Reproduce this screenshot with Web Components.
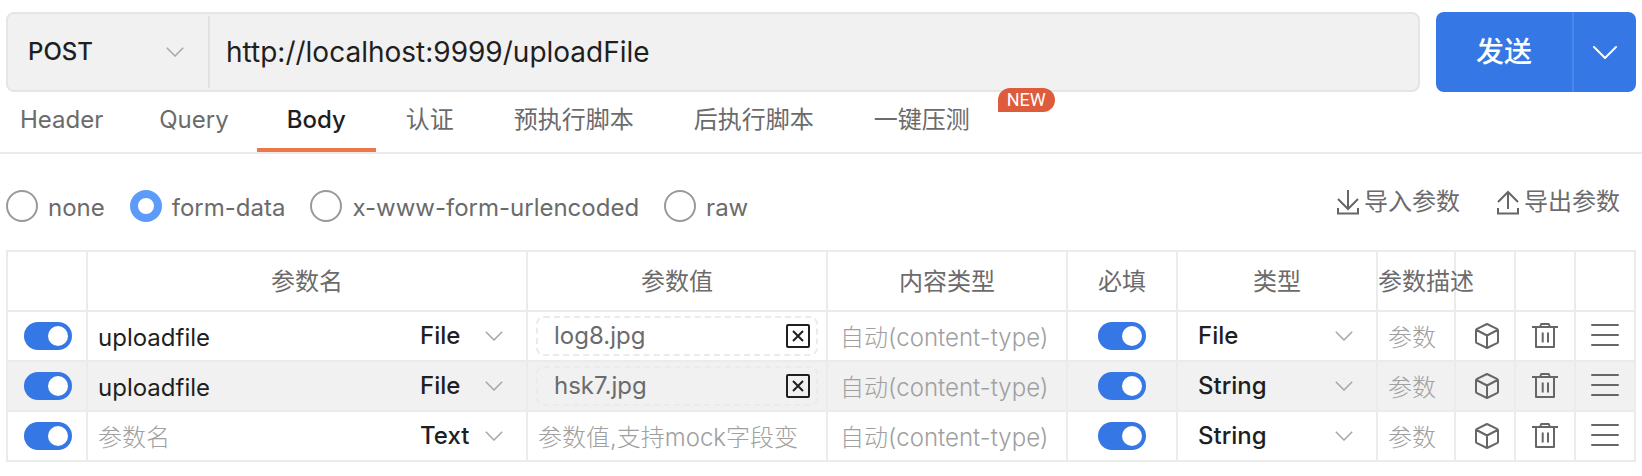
<!DOCTYPE html>
<html lang="zh-CN">
<head>
<meta charset="utf-8">
<meta name="viewport" content="width=device-width, initial-scale=1">
<title>API request</title>
<style>
  :root {
    --ink: #1f1f1f;
    --muted: #6b6b6b;
    --faint: #a0a0a0;
    --line: #ebebeb;
    --fill: #f1f1f1;
    --blue: #3577e5;
  }
  body {
    margin: 0;
    background: #fff;
    color: var(--muted);
    font: 24px/32px Inter, "Noto Sans CJK SC", sans-serif;
  }
</style>
</head>
<body>
<api-request></api-request>
<script>
const base = `<style>
  *, ::before, ::after { box-sizing: border-box; }
  :host { display: block; }
  input, select, button { font: inherit; color: inherit; margin: 0; padding: 0; border: 0; background: none; outline: 0; }
  button, select { cursor: pointer; }
  svg { display: block; }
</style>`;

class Base extends HTMLElement {
  connectedCallback() {
    if (this.shadowRoot) return;
    this.attachShadow({ mode: 'open' }).innerHTML = base + this.view();
  }
  attr(name) { return this.getAttribute(name) || ''; }
}

const ICONS = {
  chevron: [18, 10, '<path d="M.8.8 9 9l8.2-8.2" stroke="#a6a6a6" stroke-width="1.5"/>'],
  chevronWide: [24, 13, '<path d="M1 1l11 11L23 1" stroke="#fff" stroke-width="2" stroke-linecap="round" stroke-linejoin="round"/>'],
  import: [22, 26, '<path d="M11 1v19M1 10l10 10 10-10M1 19v5.5h20V19"/>'],
  export: [22, 26, '<path d="M11 20V3M1 13L11 3l10 10M1 19v5.5h20V19"/>'],
  close: [24, 24, '<g stroke="#1f1f1f"><rect x="1" y="1" width="22" height="22" rx="1"/><path d="M7 7l10 10M17 7L7 17"/></g>'],
  cube: [24, 26, '<path stroke-linejoin="round" d="M12 1l10 4.800q1 .5 1 1.500v11.400q0 1-1 1.500L12 25 2 20.200q-1-.5-1-1.500V7.300q0-1 1-1.500zM1.500 7L12 12.500 22.500 7M12 12.500v12"/>'],
  trash: [26, 26, '<path stroke-linejoin="round" d="M0 4h26M4 4v20h18V4M8 4l1.200-3h7.600L18 4M10.700 9.500v10M16 9.500v10"/>'],
  menu: [28, 24, '<path d="M1 1h26M1 11h26M1 21h26" stroke-linecap="round"/>']
};

customElements.define('ui-icon', class extends Base {
  view() {
    const [w, h, art] = ICONS[this.attr('name')];
    return `<style>:host { display: block; flex: none; }</style>
      <svg width="${w}" height="${h}" viewBox="0 0 ${w} ${h}" fill="none" stroke="#666" stroke-width="2" aria-hidden="true">${art}</svg>`;
  }
});

customElements.define('ui-switch', class extends Base {
  view() {
    return `<style>
      :host { width: 48px; height: 28px; }
      input { appearance: none; display: flex; align-items: center; width: 48px; height: 28px; padding: 0 4px; border-radius: 14px; background: #c4c4c4; }
      input::before { content: ""; width: 20px; height: 20px; border-radius: 50%; background: #fff; }
      input:checked { background: var(--blue); justify-content: flex-end; }
    </style><input type="checkbox" role="switch" checked aria-label="${this.attr('label')}">`;
  }
});

customElements.define('ui-select', class extends Base {
  view() {
    const value = this.attr('value');
    const rest = this.attr('options').split(',').filter(o => o && o !== value);
    return `<style>
      :host { display: grid; grid-template-columns: 1fr auto; align-items: center; color: var(--ink); font-weight: 500; }
      select { appearance: none; grid-area: 1 / 1 / 2 / 3; width: 100%; height: 32px; line-height: 32px; }
      ui-icon { grid-area: 1 / 2; pointer-events: none; }
    </style><select aria-label="${this.attr('label')}">
      <option selected>${value}</option>${rest.map(o => `<option>${o}</option>`).join('')}
    </select><ui-icon name="chevron"></ui-icon>`;
  }
});

customElements.define('ui-field', class extends Base {
  view() {
    return `<style>
      :host { color: var(--ink); min-width: 0; padding-top: 4px; }
      input { display: block; width: 100%; height: 32px; line-height: 32px; }
      input::placeholder { color: var(--faint); opacity: 1; font-weight: 300; }
    </style><input type="text" aria-label="${this.attr('label')}" value="${this.attr('value')}" placeholder="${this.attr('placeholder')}">`;
  }
});

customElements.define('ui-file', class extends Base {
  view() {
    return `<style>
      :host { display: flex; align-items: center; justify-content: space-between; height: 40px; padding: 0 6px 0 16px; border: 2px dashed var(--line); border-radius: 8px; }
    </style><slot></slot><button type="button" aria-label="移除文件"><ui-icon name="close"></ui-icon></button>`;
  }
});

customElements.define('request-bar', class extends Base {
  view() {
    return `<style>
      :host { display: flex; gap: 16px; padding: 12px 6px 0; }
      .address { flex: 1; display: flex; align-items: center; height: 80px; border: 2px solid #e5e5e5; border-radius: 8px; background: var(--fill); }
      ui-select { width: 202px; height: 72px; padding: 0 24px 0 20px; border-right: 2px solid #e2e2e2; }
      .url { flex: 1; min-width: 0; padding: 0 16px; height: 72px; font-size: 28px; color: var(--ink); }
      .send { display: flex; width: 200px; height: 80px; border-radius: 8px; background: var(--blue); color: #fff; overflow: hidden; }
      .go { flex: 1; font-size: 28px; font-weight: 500; }
      .more { display: grid; place-items: center; width: 64px; border-left: 2px solid #4a87ec; }
    </style>
    <div class="address">
      <ui-select label="请求方法" value="POST" options="GET,POST,PUT,DELETE"></ui-select>
      <input class="url" type="text" aria-label="请求地址" value="http://localhost:9999/uploadFile">
    </div>
    <div class="send">
      <button class="go" type="button">发送</button>
      <button class="more" type="button" aria-label="更多发送选项"><ui-icon name="chevronWide"></ui-icon></button>
    </div>`;
  }
});

customElements.define('request-tabs', class extends Base {
  view() {
    const tabs = ['Header', 'Query', 'Body', '认证', '预执行脚本', '后执行脚本', '一键压测'];
    return `<style>
      nav { display: flex; border-bottom: 2px solid var(--line); }
      button { position: relative; height: 60px; padding: 0 30px; border-bottom: 4px solid transparent; white-space: nowrap; }
      button:nth-child(-n+2) { padding: 0 28px; }
      button:first-child { padding-left: 20px; }
      button[aria-selected=true] { color: var(--ink); font-weight: 500; border-color: #ec7748; }
      .badge { position: absolute; left: calc(100% - 2px); top: -4px; padding: 0 9px; border-radius: 12px 12px 12px 0; background: #de5b3c; color: #fff; font: 18px/24px Roboto, sans-serif; }
    </style>
    <nav role="tablist">${tabs.map(t => `<button type="button" role="tab" aria-selected="${t === 'Body'}">${t}${t === '一键压测' ? '<span class="badge">NEW</span>' : ''}</button>`).join('')}</nav>`;
  }
});

customElements.define('body-options', class extends Base {
  view() {
    const kinds = ['none', 'form-data', 'x-www-form-urlencoded', 'raw'];
    return `<style>
      :host { display: flex; justify-content: space-between; align-items: flex-start; padding: 28px 22px 28px 6px; }
      .kinds { display: flex; gap: 25px; padding-top: 8px; }
      label { display: flex; gap: 10px; align-items: center; height: 32px; }
      label span { padding-top: 4px; }
      input { appearance: none; width: 32px; height: 32px; border: 2px solid #999; border-radius: 50%; background: #fff; }
      input:checked { border: 8px solid #5c9cf8; }
      .actions { display: flex; gap: 37px; padding-top: 2px; }
      .actions button { display: flex; align-items: center; gap: 5px; height: 36px; }
    </style>
    <div class="kinds" role="radiogroup" aria-label="Body">${kinds.map(k => `<label><input type="radio" name="kind"${k === 'form-data' ? ' checked' : ''}><span>${k}</span></label>`).join('')}</div>
    <div class="actions">
      <button type="button"><ui-icon name="import"></ui-icon>导入参数</button>
      <button type="button"><ui-icon name="export"></ui-icon>导出参数</button>
    </div>`;
  }
});

customElements.define('param-table', class extends Base {
  view() {
    const rows = [
      { name: 'uploadfile', kind: 'File', file: 'log8.jpg', type: 'File' },
      { name: 'uploadfile', kind: 'File', file: 'hsk7.jpg', type: 'String' },
      { name: '', kind: 'Text', file: '', type: 'String' }
    ];
    const icon = (name, label) => `<td><button class="${name}" type="button" aria-label="${label}"><ui-icon name="${name}"></ui-icon></button></td>`;
    return `<style>
      :host { padding: 0 6px 14px; }
      table { width: 100%; border-collapse: collapse; table-layout: fixed; }
      th, td { height: 50px; padding: 0; border: 2px solid var(--line); }
      th { height: 60px; padding-top: 2px; font-weight: inherit; white-space: nowrap; }
      tbody tr:nth-child(2) { background: var(--fill); }
      .on { width: 80px; } .value { width: 300px; } .ctype { width: 240px; } .req { width: 110px; }
      .type { width: 200px; } .desc { width: 78px; } .act { width: 60px; }
      td.lead { padding-left: 16px; }
      td > ui-switch { margin: 0 auto; }
      td.lead > ui-switch { margin: 0; }
      .name { display: flex; align-items: center; padding-left: 10px; padding-right: 23px; }
      .name ui-field { flex: 1; }
      .name ui-select { width: 83px; }
      .pad { padding: 0 8px; }
      .inset { padding: 0 10px; }
      .wide { padding: 0 10px 0 12px; }
      td > ui-select { padding: 0 23px 0 20px; }
      button { display: grid; place-items: center; width: 100%; height: 48px; }
      .cube { padding-left: 4px; }
    </style>
    <table>
      <colgroup><col class="on"><col><col class="value"><col class="ctype"><col class="req"><col class="type"><col class="desc"><col class="act"><col class="act"><col class="act"></colgroup>
      <thead><tr><th></th><th>参数名</th><th>参数值</th><th>内容类型</th><th>必填</th><th>类型</th><th>参数描述</th><th></th><th></th><th></th></tr></thead>
      <tbody>${rows.map(r => `<tr>
        <td class="lead"><ui-switch label="启用"></ui-switch></td>
        <td><div class="name"><ui-field label="参数名" value="${r.name}" placeholder="参数名"></ui-field><ui-select label="参数种类" value="${r.kind}" options="Text,File"></ui-select></div></td>
        <td>${r.file ? `<div class="pad"><ui-file>${r.file}</ui-file></div>` : '<div class="inset"><ui-field label="参数值" placeholder="参数值,支持mock字段变"></ui-field></div>'}</td>
        <td><div class="wide"><ui-field label="内容类型" placeholder="自动(content-type)"></ui-field></div></td>
        <td><ui-switch label="必填"></ui-switch></td>
        <td><ui-select label="类型" value="${r.type}" options="String,File,Integer"></ui-select></td>
        <td><div class="inset"><ui-field label="参数描述" placeholder="参数"></ui-field></div></td>
        ${icon('cube', '模型')}${icon('trash', '删除')}${icon('menu', '排序')}
      </tr>`).join('')}</tbody>
    </table>`;
  }
});

customElements.define('api-request', class extends Base {
  view() {
    return `<main><request-bar></request-bar><request-tabs></request-tabs><body-options></body-options><param-table></param-table></main>`;
  }
});
</script>
</body>
</html>
